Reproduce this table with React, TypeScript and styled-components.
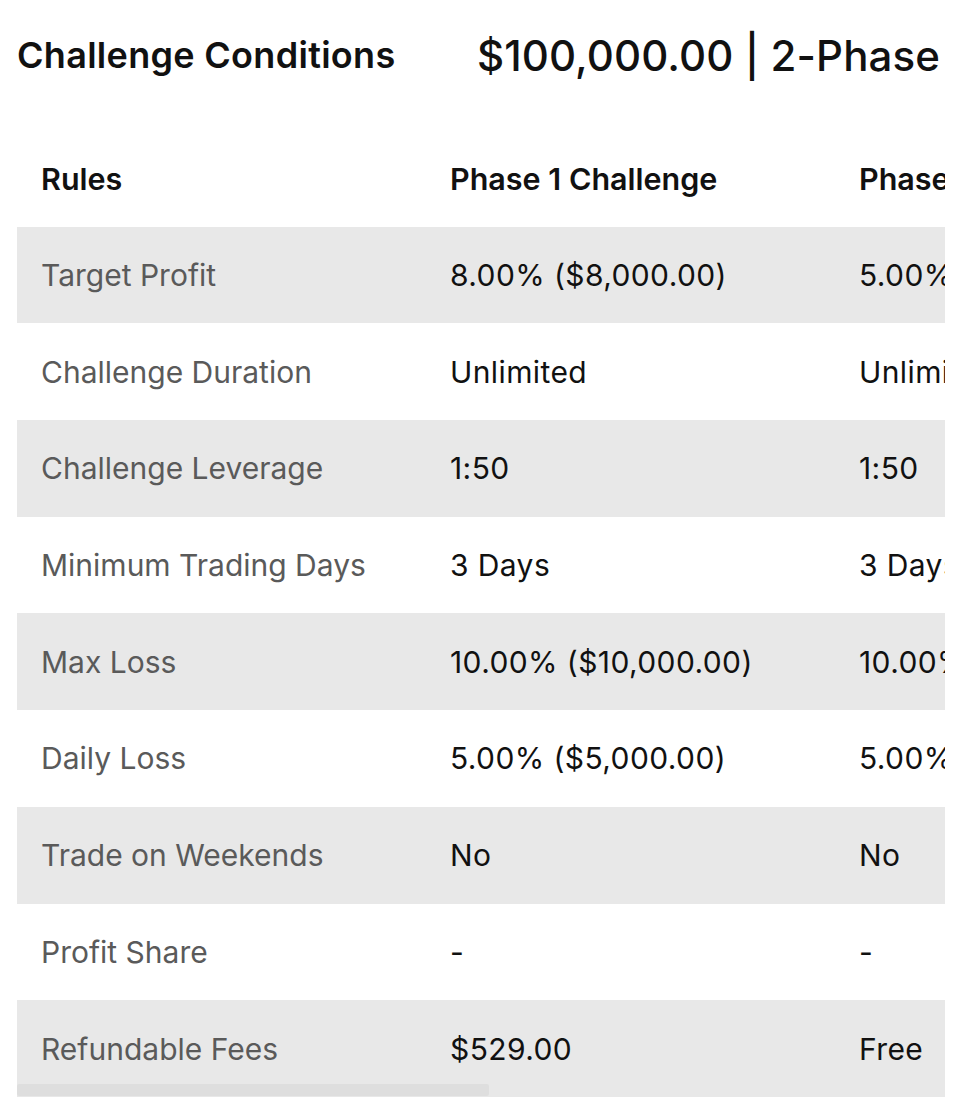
import React from "react";
import styled, { createGlobalStyle } from "styled-components";

const Global = createGlobalStyle`
  html, body { margin: 0; padding: 0; background: #ffffff; }
  body { font-family: "Inter", "Liberation Sans", sans-serif; color: #111; }
`;

const Page = styled.div`
  width: 970px;
  padding: 0 0 0 17px;
  box-sizing: border-box;
`;

const TitleBar = styled.div`
  display: grid;
  grid-template-columns: 460px 1fr;
  align-items: center;
  height: 110px;
  white-space: nowrap;
  overflow: hidden;
  width: 928px;
`;

const Title = styled.h2`
  margin: 0;
  font-size: 36px;
  font-weight: 600;
  letter-spacing: 0.3px;
  color: #111;
`;

const Subtitle = styled.div`
  font-size: 42px;
  font-weight: 500;
  letter-spacing: 0.1px;
  color: #111;
`;

const Viewport = styled.div`
  position: relative;
  width: 928px;
  margin-top: 20px;
  overflow: hidden;
`;

const Table = styled.div`
  display: flex;
  flex-direction: column;
  width: max-content;
`;

const Row = styled.div<{ $striped?: boolean }>`
  display: grid;
  grid-template-columns: repeat(4, 409px);
  height: 96.7px;
  background: ${(p) => (p.$striped ? "#e8e8e8" : "#ffffff")};
`;

const Cell = styled.div<{ $kind: "head" | "label" | "value" }>`
  display: flex;
  align-items: center;
  padding-left: 24px;
  white-space: nowrap;
  font-size: ${(p) => (p.$kind === "head" ? "30.5px" : "30px")};
  font-weight: ${(p) => (p.$kind === "head" ? 600 : 400)};
  letter-spacing: ${(p) => (p.$kind === "value" ? "0.4px" : "0")};
  color: ${(p) => (p.$kind === "label" ? "#5a5a5a" : "#111")};
`;

const ScrollThumb = styled.div`
  position: absolute;
  left: 0;
  bottom: 1px;
  width: 472px;
  height: 12px;
  background: #dedede;
  border-radius: 2px;
`;

const headers = ["Rules", "Phase 1 Challenge", "Phase 2 Challenge", "Funded Account"];

const rows: string[][] = [
  ["Target Profit", "8.00% ($8,000.00)", "5.00% ($5,000.00)", "-"],
  ["Challenge Duration", "Unlimited", "Unlimited", "Unlimited"],
  ["Challenge Leverage", "1:50", "1:50", "1:50"],
  ["Minimum Trading Days", "3 Days", "3 Days", "-"],
  ["Max Loss", "10.00% ($10,000.00)", "10.00% ($10,000.00)", "10.00% ($10,000.00)"],
  ["Daily Loss", "5.00% ($5,000.00)", "5.00% ($5,000.00)", "5.00% ($5,000.00)"],
  ["Trade on Weekends", "No", "No", "No"],
  ["Profit Share", "-", "-", "80%"],
  ["Refundable Fees", "$529.00", "Free", "-"],
];

export default function App() {
  return (
    <>
      <Global />
      <Page>
        <TitleBar>
          <Title>Challenge Conditions</Title>
          <Subtitle>$100,000.00 | 2-Phase</Subtitle>
        </TitleBar>
        <Viewport>
          <Table>
            <Row>
              {headers.map((h) => (
                <Cell key={h} $kind="head">{h}</Cell>
              ))}
            </Row>
            {rows.map((r, i) => (
              <Row key={r[0]} $striped={i % 2 === 0}>
                {r.map((c, j) => (
                  <Cell key={j} $kind={j === 0 ? "label" : "value"}>{c}</Cell>
                ))}
              </Row>
            ))}
          </Table>
          <ScrollThumb />
        </Viewport>
      </Page>
    </>
  );
}
